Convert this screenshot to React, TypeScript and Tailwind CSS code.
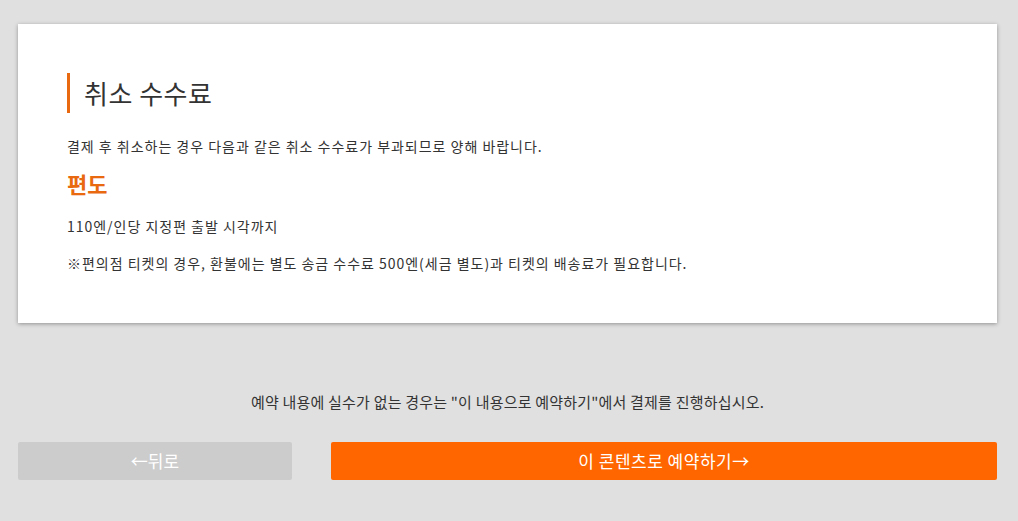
const App = () => (
  <div
    className="min-h-[521px] bg-[#e0e0e0] pl-[18px] pr-[21px] pt-[24px] pb-[42px] text-[#333]"
    style={{ fontFamily: '"Noto Sans CJK KR", "Noto Sans", sans-serif' }}
  >
    <div className="bg-white px-[49px] pt-[49px] pb-[50px] shadow-[0_1px_4px_rgba(0,0,0,0.35)]">
      <div className="flex h-[40px] items-center border-l-[3px] border-[#e8690f] pl-[14px]">
        <h2 className="text-[26px] leading-none tracking-[0.5px] text-[#333]">취소 수수료</h2>
      </div>
      <p className="mt-[23px] text-[14px] leading-[20px] tracking-[0.07em]">
        결제 후 취소하는 경우 다음과 같은 취소 수수료가 부과되므로 양해 바랍니다.
      </p>
      <h3 className="mt-[12px] text-[22px] font-bold leading-[30px] text-[#e8690f]">편도</h3>
      <p className="mt-[18px] text-[14px] leading-[20px] tracking-[0.07em]">110엔/인당 지정편 출발 시각까지</p>
      <p className="mt-[17px] text-[14px] leading-[20px] tracking-[0.07em]">
        ※편의점 티켓의 경우, 환불에는 별도 송금 수수료 500엔(세금 별도)과 티켓의 배송료가 필요합니다.
      </p>
    </div>

    <p className="mt-[69px] text-center text-[15px] leading-[20px] tracking-[0.2px]">
      예약 내용에 실수가 없는 경우는 "이 내용으로 예약하기"에서 결제를 진행하십시오.
    </p>

    <div className="mt-[30px] flex gap-[39px]">
      <button className="flex h-[38px] w-[274px] items-center justify-center rounded-[2px] bg-[#cccccc] text-[17px] text-white">
        ←뒤로
      </button>
      <button className="flex h-[38px] flex-1 items-center justify-center rounded-[2px] bg-[#ff6600] text-[17px] tracking-[0.5px] text-white">
        이 콘텐츠로 예약하기→
      </button>
    </div>
  </div>
);

export default App;
